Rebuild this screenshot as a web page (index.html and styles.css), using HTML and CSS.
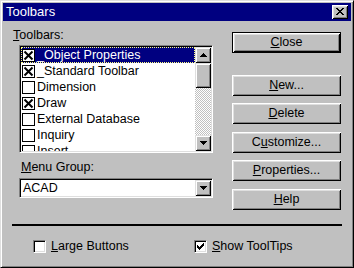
FILE: index.html
```html
<!DOCTYPE html>
<html>
<head>
<meta charset="utf-8">
<title>Toolbars</title>
<link rel="stylesheet" href="styles.css">
</head>
<body>
<div class="window">
  <div class="titlebar">
    <span class="title">Toolbars</span>
    <div class="tb-close">
      <svg width="8" height="7" viewBox="0 0 8 7" shape-rendering="crispEdges"><path d="M0 0h2v1H0zM6 0h2v1H6zM1 1h2v1H1zM5 1h2v1H5zM2 2h4v1H2zM3 3h2v1H3zM2 4h4v1H2zM1 5h2v1H1zM5 5h2v1H5zM0 6h2v1H0zM6 6h2v1H6z" fill="#000"/></svg>
    </div>
  </div>
  <div class="main">
    <div class="left">
      <div class="label"><u>T</u>oolbars:</div>
      <div class="listbox">
        <div class="items">
          <div class="item selected"><span class="cb"><svg width="11" height="11" viewBox="0 0 11 11"><path d="M1.5 1.5L9.5 9.5M9.5 1.5L1.5 9.5" stroke="#000" stroke-width="2"/></svg></span><span class="txt">_Object Properties</span></div>
          <div class="item"><span class="cb"><svg width="11" height="11" viewBox="0 0 11 11"><path d="M1.5 1.5L9.5 9.5M9.5 1.5L1.5 9.5" stroke="#000" stroke-width="2"/></svg></span><span class="txt">_Standard Toolbar</span></div>
          <div class="item"><span class="cb"></span><span class="txt">Dimension</span></div>
          <div class="item"><span class="cb"><svg width="11" height="11" viewBox="0 0 11 11"><path d="M1.5 1.5L9.5 9.5M9.5 1.5L1.5 9.5" stroke="#000" stroke-width="2"/></svg></span><span class="txt">Draw</span></div>
          <div class="item"><span class="cb"></span><span class="txt">External Database</span></div>
          <div class="item"><span class="cb"></span><span class="txt">Inquiry</span></div>
          <div class="item"><span class="cb"></span><span class="txt">Insert</span></div>
        </div>
        <div class="vscroll">
          <div class="sbtn"><svg width="7" height="4" viewBox="0 0 7 4" shape-rendering="crispEdges"><path d="M3 0h1v1h1v1h1v1h1v1H0V3h1V2h1V1h1z" fill="#000"/></svg></div>
          <div class="thumb"></div>
          <div class="track"></div>
          <div class="sbtn"><svg width="7" height="4" viewBox="0 0 7 4" shape-rendering="crispEdges"><path d="M0 0h7v1H6v1H5v1H4v1H3V3H2V2H1V1H0z" fill="#000"/></svg></div>
        </div>
      </div>
      <div class="label label-menu"><u>M</u>enu Group:</div>
      <div class="combo">
        <span class="combo-val">ACAD</span>
        <div class="sbtn"><svg width="7" height="4" viewBox="0 0 7 4" shape-rendering="crispEdges"><path d="M0 0h7v1H6v1H5v1H4v1H3V3H2V2H1V1H0z" fill="#000"/></svg></div>
      </div>
    </div>
    <div class="right">
      <div class="btn default"><u>C</u>lose</div>
      <div class="btn"><u>N</u>ew...</div>
      <div class="btn"><u>D</u>elete</div>
      <div class="btn">C<u>u</u>stomize...</div>
      <div class="btn"><u>P</u>roperties...</div>
      <div class="btn"><u>H</u>elp</div>
    </div>
  </div>
  <div class="separator"></div>
  <div class="options">
    <div class="opt"><span class="chk"></span><span><u>L</u>arge Buttons</span></div>
    <div class="opt"><span class="chk"><svg width="7" height="7" viewBox="0 0 7 7" shape-rendering="crispEdges"><path d="M6 0h1v3H6v1H5v1H4v1H3v1H2V6H1V5H0V2h1v1h1v1h1V3h1V2h1V1h1z" fill="#000"/></svg></span><span><u>S</u>how ToolTips</span></div>
  </div>
</div>
</body>
</html>
```

FILE: styles.css
```css
* { box-sizing: border-box; }
html, body { margin: 0; padding: 0; }
body {
  font-family: "Liberation Sans", Arial, sans-serif;
  font-size: 12.5px;
  color: #000;
  background: #c0c0c0;
}
u { text-decoration: underline; text-underline-offset: 1px; }

.window {
  width: 354px;
  height: 268px;
  background: #c0c0c0;
  border: 1px solid;
  border-color: #dfdfdf #000 #000 #dfdfdf;
  box-shadow: inset 1px 1px #fff, inset -1px -1px #808080;
  padding: 2px;
}

.titlebar {
  height: 18px;
  background: #000080;
  color: #fff;
  display: flex;
  align-items: center;
  justify-content: space-between;
  padding: 0 3px 0 3px;
}
.title { font-size: 13px; line-height: 18px; }
.tb-close {
  width: 16px;
  height: 14px;
  background: #c0c0c0;
  box-shadow: inset 1px 1px #fff, inset -1px -1px #000, inset 2px 2px #dfdfdf, inset -2px -2px #808080;
  display: flex;
  align-items: center;
  justify-content: center;
  padding-bottom: 1px;
}
.tb-close svg { display: block; }

.main {
  display: flex;
  padding: 7px 0 0 10px;
}
.left { width: 200px; }
.label { height: 14px; line-height: 14px; }
.label-menu { margin: 7px 0 0 8px; }

.listbox {
  margin: 3px 0 0 6px;
  width: 194px;
  height: 108px;
  border: 1px solid;
  border-color: #808080 #fff #fff #808080;
  box-shadow: inset 1px 1px #000, inset -1px -1px #dfdfdf;
  padding: 1px;
  background: #fff;
  display: flex;
}
.items { flex: 1; overflow: hidden; }
.item {
  height: 16px;
  display: flex;
  align-items: center;
  padding-left: 1px;
  white-space: nowrap;
}
.item.selected {
  background: #000080;
  color: #fff;
  outline: 1px dotted #ffff80;
  outline-offset: -1px;
}
.cb {
  width: 13px;
  height: 13px;
  border: 1px solid #000;
  background: #fff;
  margin-right: 2px;
  flex: none;
}
.cb svg { display: block; }
.txt { line-height: 16px; }

.vscroll {
  width: 16px;
  display: flex;
  flex-direction: column;
}
.sbtn {
  width: 16px;
  height: 16px;
  flex: none;
  background: #c0c0c0;
  box-shadow: inset 1px 1px #dfdfdf, inset -1px -1px #000, inset 2px 2px #fff, inset -2px -2px #808080;
  display: flex;
  align-items: center;
  justify-content: center;
}
.sbtn svg { display: block; }
.thumb {
  height: 25px;
  flex: none;
  background: #c0c0c0;
  box-shadow: inset 1px 1px #dfdfdf, inset -1px -1px #000, inset 2px 2px #fff, inset -2px -2px #808080;
}
.track {
  flex: 1;
  background: repeating-conic-gradient(#c0c0c0 0 25%, #fff 0 50%) 0 0 / 2px 2px;
}

.combo {
  margin: 4px 0 0 6px;
  width: 194px;
  height: 20px;
  border: 1px solid;
  border-color: #808080 #fff #fff #808080;
  box-shadow: inset 1px 1px #000, inset -1px -1px #dfdfdf;
  padding: 1px;
  background: #fff;
  display: flex;
  align-items: center;
}
.combo-val { flex: 1; padding-left: 2px; line-height: 16px; }

.right {
  margin: 4px 0 0 19px;
  width: 109px;
  display: flex;
  flex-direction: column;
  gap: 7.5px;
}
.btn {
  height: 21px;
  line-height: 21px;
  text-align: center;
  background: #c0c0c0;
  box-shadow: inset 1px 1px #fff, inset -1px -1px #000, inset 2px 2px #dfdfdf, inset -2px -2px #808080;
}
.btn.default {
  margin-bottom: 14px;
  border: 1px solid #000;
  line-height: 19px;
}

.separator {
  margin: 14px 0 0 9px;
  width: 330px;
  height: 2px;
  background: #000;
}

.options {
  display: flex;
  margin-top: 14px;
  padding-left: 30px;
}
.opt {
  display: flex;
  align-items: center;
  gap: 5px;
  line-height: 13px;
}
.opt:first-child { width: 161px; }
.chk {
  width: 13px;
  height: 13px;
  border: 1px solid;
  border-color: #808080 #fff #fff #808080;
  box-shadow: inset 1px 1px #000, inset -1px -1px #dfdfdf;
  background: #fff;
  display: flex;
  align-items: center;
  justify-content: center;
  flex: none;
}
.chk svg { display: block; }
```
